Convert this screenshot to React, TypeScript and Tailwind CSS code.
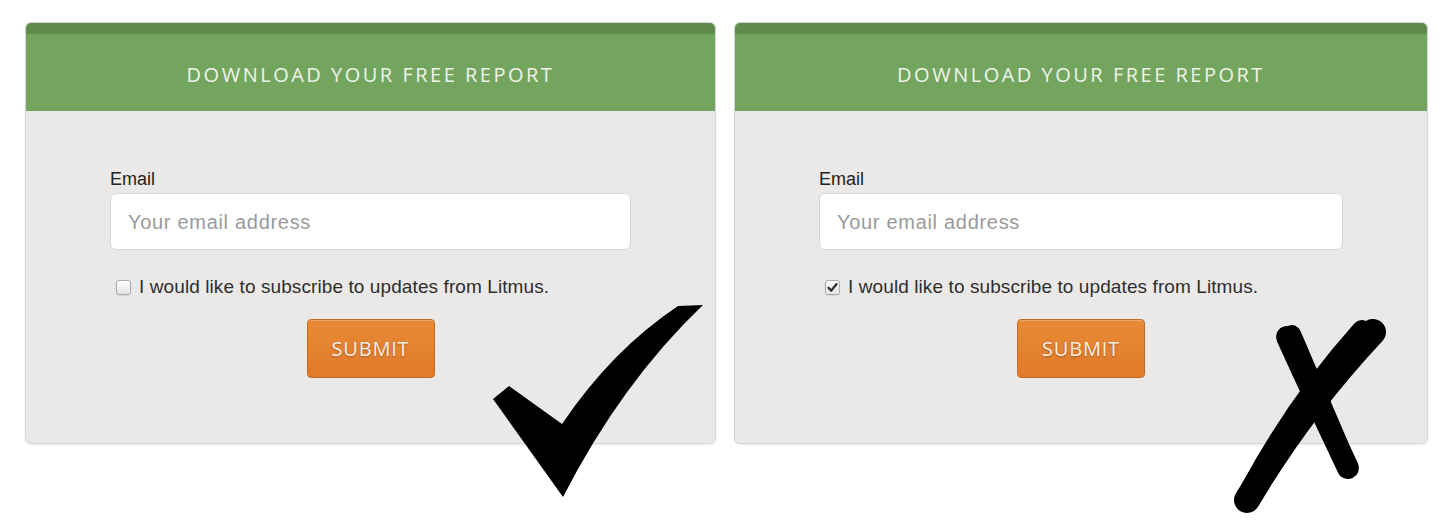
import React from 'react';

function Checkbox({ checked }: { checked: boolean }) {
  return (
    <span className="flex h-[15px] w-[15px] shrink-0 items-center justify-center rounded-[3px] border border-[#a9a9a9] bg-gradient-to-b from-[#ffffff] to-[#e4e4e4] shadow-[0_1px_1px_rgba(0,0,0,0.08)]">
      {checked && (
        <svg width="11" height="11" viewBox="0 0 11 11">
          <path d="M1.5 5.8 L4.3 8.6 L9.6 2" fill="none" stroke="#2b2b2b" strokeWidth="2.2" strokeLinecap="round" strokeLinejoin="round" />
        </svg>
      )}
    </span>
  );
}

function ReportCard({ checked, width }: { checked: boolean; width: string }) {
  return (
    <div className={`${width} overflow-hidden rounded-[6px] border border-[#d8d6d4] bg-[#ebe9e7] shadow-[0_1px_2px_rgba(0,0,0,0.08)]`}>
      <div className="h-[11px] bg-[#5f8c4c]" />
      <div className="flex h-[77px] items-center justify-center bg-[#74a55f] pt-[5px]">
        <h2 className="text-[20px] tracking-[0.125em] text-[#eef4ea]" style={{ fontFamily: '"Open Sans", sans-serif' }}>
          DOWNLOAD YOUR FREE REPORT
        </h2>
      </div>
      <div className="px-[84px] pt-[58px] pb-[65px]" style={{ fontFamily: '"Liberation Sans", Arial, sans-serif' }}>
        <label className="block text-[18px] leading-[20px] text-[#222]">Email</label>
        <div className="mt-[4px] flex h-[57px] items-center rounded-[6px] border border-[#d6d6d6] bg-white px-[17px]">
          <span className="text-[20px] tracking-[0.035em] text-[#9a9a9a]">Your email address</span>
        </div>
        <div className="mt-[28px] flex items-center gap-[8px] pl-[6px]">
          <Checkbox checked={checked} />
          <span className="text-[19px] leading-[18px] tracking-[0.005em] text-[#2e2e2e]">I would like to subscribe to updates from Litmus.</span>
        </div>
        <div className="mt-[23px] flex justify-center">
          <button className="h-[59px] w-[128px] rounded-[4px] border border-[#c76a24] bg-gradient-to-b from-[#e88a35] to-[#e07a2c] text-[20px] tracking-[0.04em] text-[#fbeee2] shadow-[inset_0_1px_0_rgba(255,255,255,0.25)] [text-shadow:0_1px_2px_rgba(0,0,0,0.3)]" style={{ fontFamily: '"Open Sans", sans-serif' }}>
            SUBMIT
          </button>
        </div>
      </div>
    </div>
  );
}

export default function App() {
  return (
    <div className="relative h-[526px] w-[1454px] overflow-hidden bg-white">
      <div className="flex items-start gap-[18px] pl-[25px] pt-[22px]">
        <ReportCard checked={false} width="w-[691px]" />
        <ReportCard checked={true} width="w-[694px]" />
      </div>
      {/* hand-drawn marks over the cards */}
      <svg className="pointer-events-none absolute left-0 top-0" width="1454" height="526" viewBox="0 0 1454 526">
        <path d="M493 399 L509 386 L562 424 Q612 350 678 306 L703 305 Q622 382 563 497 Z" fill="#000" />
        <path d="M1287 337 Q1318 405 1348 468" fill="none" stroke="#000" strokeWidth="22" strokeLinecap="round" />
        <path d="M1292 334 Q1320 400 1346 460" fill="none" stroke="#000" strokeWidth="18" strokeLinecap="round" />
        <path d="M1373 332 Q1300 410 1247 500" fill="none" stroke="#000" strokeWidth="26" strokeLinecap="round" />
        <path d="M1362 330 Q1295 405 1250 490" fill="none" stroke="#000" strokeWidth="20" strokeLinecap="round" />
      </svg>
    </div>
  );
}
